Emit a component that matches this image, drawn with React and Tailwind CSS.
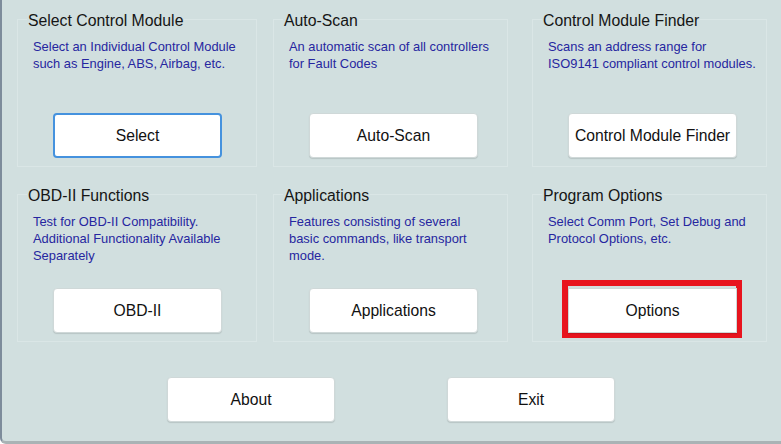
import React from "react";

const font = { fontFamily: '"Liberation Sans", Arial, sans-serif' };

function Group({ title, desc, btn, width, ml, focused, highlighted }) {
  return (
    <div
      className={`h-[148px] border border-[#dae6e6] ${ml}`}
      style={{ width }}
    >
      <div className="-mt-[9px] ml-[9px] h-[20px] leading-[20px] text-[15.8px] text-[#151515] w-fit bg-[#d1dfdf] px-[1px]">
        {title}
      </div>
      <div className="mt-[7px] ml-[15px] h-[75px] text-[12.9px] leading-[17px] text-[#2626a0]">
        {desc.map((l, i) => (
          <div key={i}>{l}</div>
        ))}
      </div>
      <div className="ml-[35px] relative w-[169px] h-[45px]">
        {highlighted && (
          <div className="absolute -left-[6px] -top-[8px] w-[180px] h-[58px] border-[6px] border-[#e8141e]" />
        )}
        <div
          className={`relative w-full h-full flex items-center justify-center bg-white text-[15.7px] text-[#111] rounded-[4px] ${
            focused
              ? "border-2 border-[#4592de]"
              : "border border-[#cfd8d8] shadow-[0_1px_1px_rgba(0,0,0,0.12)]"
          } ${highlighted ? "rounded-none" : ""}`}
        >
          {btn}
        </div>
      </div>
    </div>
  );
}

export default function App() {
  return (
    <div
      className="w-[781px] h-[444px] bg-[#d1dfdf] border-l-[2px] border-l-[#7d8c9b] border-b-[3px] border-b-[#a9b3b5] rounded-bl-[6px] overflow-hidden"
      style={font}
    >
      <div className="pt-[19px] pl-[15px]">
        <div className="flex">
          <Group
            title="Select Control Module"
            desc={["Select an Individual Control Module", "such as Engine, ABS, Airbag, etc."]}
            btn="Select"
            width={240}
            ml=""
            focused
          />
          <Group
            title="Auto-Scan"
            desc={["An automatic scan of all controllers", "for Fault Codes"]}
            btn="Auto-Scan"
            width={235}
            ml="ml-[16px]"
          />
          <Group
            title="Control Module Finder"
            desc={["Scans an address range for", "ISO9141 compliant control modules."]}
            btn="Control Module Finder"
            width={235}
            ml="ml-[24px]"
          />
        </div>
        <div className="flex mt-[27px]">
          <Group
            title="OBD-II Functions"
            desc={[
              "Test for OBD-II Compatibility.",
              "Additional Functionality Available",
              "Separately",
            ]}
            btn="OBD-II"
            width={240}
            ml=""
          />
          <Group
            title="Applications"
            desc={[
              "Features consisting of several",
              "basic commands, like transport",
              "mode.",
            ]}
            btn="Applications"
            width={235}
            ml="ml-[16px]"
          />
          <Group
            title="Program Options"
            desc={["Select Comm Port, Set Debug and", "Protocol Options, etc."]}
            btn="Options"
            width={235}
            ml="ml-[24px]"
            highlighted
          />
        </div>
      </div>
      <div className="flex mt-[35px] pl-[165px]">
        <div className="w-[168px] h-[45px] flex items-center justify-center bg-white text-[15.7px] text-[#111] rounded-[4px] border border-[#cfd8d8] shadow-[0_1px_1px_rgba(0,0,0,0.12)]">
          About
        </div>
        <div className="ml-[112px] w-[168px] h-[45px] flex items-center justify-center bg-white text-[15.7px] text-[#111] rounded-[4px] border border-[#cfd8d8] shadow-[0_1px_1px_rgba(0,0,0,0.12)]">
          Exit
        </div>
      </div>
    </div>
  );
}
